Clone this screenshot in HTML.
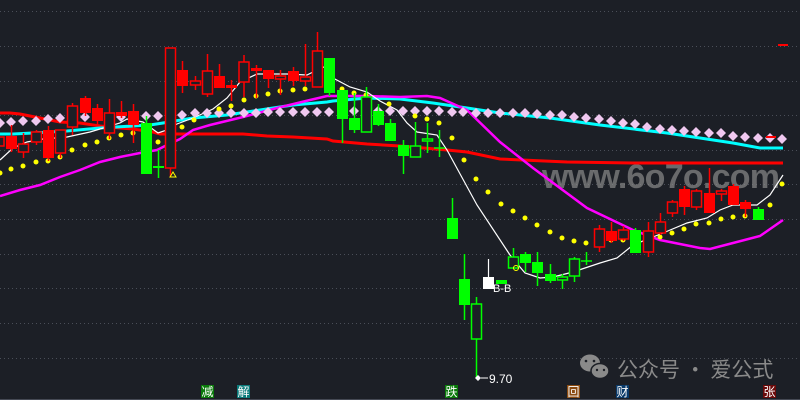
<!DOCTYPE html>
<html><head><meta charset="utf-8"><style>
html,body{margin:0;padding:0;background:#1c1f26;}
svg{display:block}
</style></head><body>
<svg width="800" height="400" viewBox="0 0 800 400" xmlns="http://www.w3.org/2000/svg">
<rect width="800" height="400" fill="#1c1f26"/>
<g stroke="#4a4e58" stroke-width="1" stroke-dasharray="1,3">
<line x1="0" y1="11.5" x2="800" y2="11.5"/><line x1="0" y1="46.5" x2="800" y2="46.5"/><line x1="0" y1="81.5" x2="800" y2="81.5"/><line x1="0" y1="115.5" x2="800" y2="115.5"/><line x1="0" y1="150.5" x2="800" y2="150.5"/><line x1="0" y1="184.5" x2="800" y2="184.5"/><line x1="0" y1="219.5" x2="800" y2="219.5"/><line x1="0" y1="254.5" x2="800" y2="254.5"/><line x1="0" y1="288.5" x2="800" y2="288.5"/><line x1="0" y1="323.5" x2="800" y2="323.5"/><line x1="0" y1="358.5" x2="800" y2="358.5"/>
</g>
<line x1="0" y1="399.5" x2="800" y2="399.5" stroke="#454954"/>
<!-- watermark -->
<text x="542" y="188" font-family="Liberation Sans, sans-serif" font-size="34" font-weight="bold" fill="#8a8a8a" fill-opacity="0.7" textLength="238">www.6o7o.com</text>
<!-- lines -->
<polyline fill="none" stroke="#ff0000" stroke-width="3" points="0,113 10,113 20,114 40,118 60,122 80,123 100,126 120,128 133,129 153,132 160,134 243,134 267,136 293,137 327,139 333,141 367,144 400,146 447,150 467,152 500,159 567,162 633,163 700,163 783,163"/>
<polyline fill="none" stroke="#00ffff" stroke-width="3" points="0,134 13,134 33,133 67,131 100,128 133,126 150,125 163,123 193,118 227,115 260,110 293,105 327,102 333,101 367,98 400,99 433,103 467,108 500,113 550,118 600,125 667,133 700,138 733,143 760,148 783,148"/>
<polyline fill="none" stroke="#ff00ff" stroke-width="2.5" points="0,196 20,190 40,185 60,177 80,170 100,162 120,157 140,153 157,150 167,145 180,139 193,130 210,125 243,117 277,108 310,100 327,96 367,96 400,97 427,96 440,98 467,110 500,142 533,168 587,208 633,230 660,240 700,248 710,249 733,243 760,236 783,220"/>
<polyline fill="none" stroke="#ffffff" stroke-width="1.2" points="0,160 13,148 27,142 43,139 67,137 90,132 100,129 120,123 127,119 143,122 158,133 167,130 177,124 193,118 213,109 227,98 240,82 257,74 287,74 307,75 313,72 324,67 333,78 350,87 367,92 380,101 397,110 407,123 417,132 437,135 447,150 477,205 510,255 525,273 540,278 553,277 573,272 600,263 617,258 633,245 663,233 687,223 707,218 720,210 733,205 757,205 770,195 783,175"/>
<!-- pink diamonds -->
<g fill="#f0c8f0">
<path d="M0,118l5,5l-5,5l-5,-5z"/><path d="M11,117l5,5l-5,5l-5,-5z"/><path d="M23,116l5,5l-5,5l-5,-5z"/><path d="M36,116l5,5l-5,5l-5,-5z"/><path d="M48,114l5,5l-5,5l-5,-5z"/><path d="M60,113l5,5l-5,5l-5,-5z"/><path d="M85,112l5,5l-5,5l-5,-5z"/><path d="M121,112l5,5l-5,5l-5,-5z"/><path d="M146,111l5,5l-5,5l-5,-5z"/><path d="M158,111l5,5l-5,5l-5,-5z"/><path d="M182,110l5,5l-5,5l-5,-5z"/><path d="M195,108l5,5l-5,5l-5,-5z"/><path d="M207,108l5,5l-5,5l-5,-5z"/><path d="M219,108l5,5l-5,5l-5,-5z"/><path d="M231,108l5,5l-5,5l-5,-5z"/><path d="M244,108l5,5l-5,5l-5,-5z"/><path d="M256,108l5,5l-5,5l-5,-5z"/><path d="M268,107l5,5l-5,5l-5,-5z"/><path d="M280,107l5,5l-5,5l-5,-5z"/><path d="M293,107l5,5l-5,5l-5,-5z"/><path d="M305,107l5,5l-5,5l-5,-5z"/><path d="M317,107l5,5l-5,5l-5,-5z"/><path d="M329,107l5,5l-5,5l-5,-5z"/><path d="M354,106l5,5l-5,5l-5,-5z"/><path d="M378,106l5,5l-5,5l-5,-5z"/><path d="M390,106l5,5l-5,5l-5,-5z"/><path d="M403,106l5,5l-5,5l-5,-5z"/><path d="M415,106l5,5l-5,5l-5,-5z"/><path d="M427,106l5,5l-5,5l-5,-5z"/><path d="M439,106l5,5l-5,5l-5,-5z"/><path d="M452,107l5,5l-5,5l-5,-5z"/><path d="M463,107l5,5l-5,5l-5,-5z"/><path d="M476,108l5,5l-5,5l-5,-5z"/><path d="M488,108l5,5l-5,5l-5,-5z"/><path d="M500,108l5,5l-5,5l-5,-5z"/><path d="M513,108l5,5l-5,5l-5,-5z"/><path d="M525,108l5,5l-5,5l-5,-5z"/><path d="M537,109l5,5l-5,5l-5,-5z"/><path d="M550,110l5,5l-5,5l-5,-5z"/><path d="M562,110l5,5l-5,5l-5,-5z"/><path d="M574,112l5,5l-5,5l-5,-5z"/><path d="M586,113l5,5l-5,5l-5,-5z"/><path d="M599,114l5,5l-5,5l-5,-5z"/><path d="M611,116l5,5l-5,5l-5,-5z"/><path d="M623,118l5,5l-5,5l-5,-5z"/><path d="M635,119l5,5l-5,5l-5,-5z"/><path d="M647,122l5,5l-5,5l-5,-5z"/><path d="M660,124l5,5l-5,5l-5,-5z"/><path d="M672,125l5,5l-5,5l-5,-5z"/><path d="M684,126l5,5l-5,5l-5,-5z"/><path d="M696,127l5,5l-5,5l-5,-5z"/><path d="M709,128l5,5l-5,5l-5,-5z"/><path d="M721,128l5,5l-5,5l-5,-5z"/><path d="M733,131l5,5l-5,5l-5,-5z"/><path d="M745,132l5,5l-5,5l-5,-5z"/><path d="M758,133l5,5l-5,5l-5,-5z"/><path d="M770,133l5,5l-5,5l-5,-5z"/><path d="M782,134l5,5l-5,5l-5,-5z"/>
</g>
<!-- yellow dots -->
<g fill="#ffff00">
<circle cx="0" cy="173" r="2.5"/><circle cx="11" cy="169" r="2.5"/><circle cx="23" cy="166" r="2.5"/><circle cx="36" cy="162" r="2.5"/><circle cx="48" cy="161" r="2.5"/><circle cx="60" cy="157" r="2.5"/><circle cx="72" cy="150" r="2.5"/><circle cx="85" cy="145" r="2.5"/><circle cx="97" cy="142" r="2.5"/><circle cx="109" cy="138" r="2.5"/><circle cx="121" cy="135" r="2.5"/><circle cx="133" cy="133" r="2.5"/><circle cx="158" cy="142" r="2.5"/><circle cx="182" cy="127" r="2.5"/><circle cx="194" cy="120" r="2.5"/><circle cx="219" cy="109" r="2.5"/><circle cx="231" cy="106" r="2.5"/><circle cx="244" cy="100" r="2.5"/><circle cx="256" cy="96" r="2.5"/><circle cx="268" cy="94" r="2.5"/><circle cx="280" cy="91" r="2.5"/><circle cx="293" cy="90" r="2.5"/><circle cx="305" cy="89" r="2.5"/><circle cx="342" cy="89" r="2.5"/><circle cx="354" cy="93" r="2.5"/><circle cx="366" cy="95" r="2.5"/><circle cx="389" cy="104" r="2.5"/><circle cx="415" cy="116" r="2.5"/><circle cx="427" cy="119" r="2.5"/><circle cx="439" cy="123" r="2.5"/><circle cx="452" cy="138" r="2.5"/><circle cx="464" cy="160" r="2.5"/><circle cx="476" cy="179" r="2.5"/><circle cx="488" cy="192" r="2.5"/><circle cx="501" cy="204" r="2.5"/><circle cx="513" cy="211" r="2.5"/><circle cx="525" cy="218" r="2.5"/><circle cx="537" cy="225" r="2.5"/><circle cx="550" cy="232" r="2.5"/><circle cx="562" cy="238" r="2.5"/><circle cx="574" cy="241" r="2.5"/><circle cx="586" cy="243" r="2.5"/><circle cx="611" cy="240" r="2.5"/><circle cx="623" cy="240" r="2.5"/><circle cx="660" cy="237" r="2.5"/><circle cx="672" cy="233" r="2.5"/><circle cx="684" cy="229" r="2.5"/><circle cx="696" cy="224" r="2.5"/><circle cx="709" cy="223" r="2.5"/><circle cx="721" cy="219" r="2.5"/><circle cx="733" cy="217" r="2.5"/><circle cx="745" cy="216" r="2.5"/><circle cx="770" cy="205" r="2.5"/><circle cx="782" cy="184" r="2.5"/>
</g>
<!-- red candles -->
<g stroke="#ff0000" stroke-width="1.5">
<line x1="11.5" y1="125" x2="11.5" y2="152"/><line x1="23.5" y1="133" x2="23.5" y2="158"/><line x1="36.5" y1="130" x2="36.5" y2="145"/><line x1="48.5" y1="126" x2="48.5" y2="161"/><line x1="60.5" y1="130" x2="60.5" y2="158"/><line x1="72.5" y1="103" x2="72.5" y2="135"/><line x1="85.5" y1="96" x2="85.5" y2="116"/><line x1="97.5" y1="104" x2="97.5" y2="126"/><line x1="109.5" y1="99" x2="109.5" y2="139"/><line x1="121.5" y1="101" x2="121.5" y2="118"/><line x1="133.5" y1="104" x2="133.5" y2="143"/><line x1="170.5" y1="78" x2="170.5" y2="177"/>
<line x1="182.5" y1="61" x2="182.5" y2="93"/><line x1="195.5" y1="76" x2="195.5" y2="90"/><line x1="207.5" y1="54" x2="207.5" y2="97"/><line x1="219.5" y1="64" x2="219.5" y2="88"/><line x1="231.5" y1="80" x2="231.5" y2="101"/><line x1="244" y1="55" x2="244" y2="97"/><line x1="256.5" y1="65" x2="256.5" y2="98"/><line x1="268.5" y1="70" x2="268.5" y2="88"/><line x1="280.5" y1="70" x2="280.5" y2="95"/><line x1="293.5" y1="67" x2="293.5" y2="86"/><line x1="305.5" y1="44" x2="305.5" y2="86"/><line x1="317.5" y1="32" x2="317.5" y2="87"/>
<line x1="599.5" y1="225" x2="599.5" y2="252"/><line x1="611.5" y1="222" x2="611.5" y2="243"/><line x1="623.5" y1="226" x2="623.5" y2="241"/><line x1="648.5" y1="222" x2="648.5" y2="257"/><line x1="660.5" y1="213" x2="660.5" y2="235"/><line x1="672.5" y1="200" x2="672.5" y2="217"/><line x1="684.5" y1="186" x2="684.5" y2="215"/><line x1="696.5" y1="189" x2="696.5" y2="210"/><line x1="709.5" y1="168" x2="709.5" y2="213"/><line x1="721.5" y1="189" x2="721.5" y2="201"/><line x1="733.5" y1="184" x2="733.5" y2="205"/><line x1="745.5" y1="200" x2="745.5" y2="217"/>
</g>
<g fill="#ff0000">
<rect x="6" y="136" width="11" height="13"/><rect x="43" y="130" width="11" height="28"/><rect x="80" y="98" width="11" height="15"/><rect x="92" y="108" width="11" height="13"/><rect x="116" y="112" width="11" height="4"/><rect x="128" y="111" width="11" height="14"/>
<rect x="177" y="70" width="11" height="16"/><rect x="214" y="76" width="11" height="12"/><rect x="226" y="85" width="11" height="3"/><rect x="251" y="68" width="11" height="3"/><rect x="263" y="70" width="11" height="9"/><rect x="288" y="71" width="11" height="10"/>
<rect x="606" y="231" width="11" height="10"/><rect x="679" y="189" width="11" height="18"/><rect x="704" y="193" width="11" height="20"/><rect x="728" y="186" width="11" height="19"/><rect x="740" y="202" width="11" height="7"/>
<rect x="766" y="136" width="10" height="2"/><rect x="778" y="44" width="10" height="2"/>
</g>
<g fill="#1c1f26" stroke="#ff0000" stroke-width="1.5">
<rect x="-4" y="137" width="8" height="9"/><rect x="18.5" y="144" width="10" height="8"/><rect x="31.5" y="132" width="10" height="10"/><rect x="55.5" y="130" width="10" height="23"/><rect x="67.5" y="106" width="10" height="21"/><rect x="104.5" y="113" width="10" height="20"/><rect x="165.5" y="48" width="10" height="120"/>
<rect x="190.5" y="81" width="10" height="4"/><rect x="202.5" y="71" width="10" height="23"/><rect x="239" y="62" width="10" height="20"/><rect x="275.5" y="76" width="10" height="3"/><rect x="300.5" y="77" width="10" height="4"/><rect x="312.5" y="51" width="10" height="36"/>
<rect x="594.5" y="229" width="10" height="18"/><rect x="618.5" y="230" width="10" height="9"/><rect x="643.5" y="231" width="10" height="21"/><rect x="655.5" y="222" width="10" height="11"/><rect x="667.5" y="202" width="10" height="11"/><rect x="691.5" y="191" width="10" height="16"/><rect x="716.5" y="191" width="10" height="3"/>
</g>
<!-- green candles -->
<g stroke="#00ff00" stroke-width="1.5">
<line x1="146.5" y1="116" x2="146.5" y2="174"/><line x1="158.5" y1="150" x2="158.5" y2="178"/><line x1="153" y1="167" x2="164" y2="167" stroke-width="2"/>
<line x1="329.5" y1="58" x2="329.5" y2="96"/><line x1="342.5" y1="90" x2="342.5" y2="143"/><line x1="354.5" y1="93" x2="354.5" y2="133"/><line x1="366.5" y1="87" x2="366.5" y2="132"/><line x1="378.5" y1="104" x2="378.5" y2="126"/><line x1="390.5" y1="119" x2="390.5" y2="141"/><line x1="403.5" y1="140" x2="403.5" y2="174"/><line x1="415.5" y1="122" x2="415.5" y2="146"/><line x1="427.5" y1="123" x2="427.5" y2="153"/><line x1="439.5" y1="130" x2="439.5" y2="157"/><line x1="434" y1="148" x2="445" y2="148"/>
<line x1="452.5" y1="198" x2="452.5" y2="239"/><line x1="464.5" y1="254" x2="464.5" y2="320"/><line x1="476.5" y1="297" x2="476.5" y2="378"/><line x1="513.5" y1="248" x2="513.5" y2="268"/><line x1="525.5" y1="252" x2="525.5" y2="272"/><line x1="537.5" y1="252" x2="537.5" y2="286"/><line x1="550.5" y1="264" x2="550.5" y2="283"/><line x1="562.5" y1="274" x2="562.5" y2="289"/><line x1="574.5" y1="257" x2="574.5" y2="282"/><line x1="586.5" y1="252" x2="586.5" y2="265"/><line x1="581" y1="261" x2="592" y2="261"/><line x1="635.5" y1="228" x2="635.5" y2="253"/><line x1="758.5" y1="207" x2="758.5" y2="220"/>
</g>
<g fill="#00ff00">
<rect x="141" y="123" width="11" height="51"/><rect x="324" y="58" width="11" height="35"/><rect x="337" y="90" width="11" height="29"/><rect x="349" y="118" width="11" height="12"/><rect x="373" y="111" width="11" height="14"/><rect x="385" y="123" width="11" height="18"/><rect x="398" y="145" width="11" height="11"/>
<rect x="447" y="218" width="11" height="21"/><rect x="459" y="279" width="11" height="26"/><rect x="496" y="280" width="11" height="4"/><rect x="520" y="254" width="11" height="9"/><rect x="532" y="262" width="11" height="11"/><rect x="545" y="274" width="11" height="7"/><rect x="630" y="230" width="11" height="23"/><rect x="753" y="209" width="11" height="11"/>
</g>
<g fill="#1c1f26" stroke="#00ff00" stroke-width="1.5">
<rect x="361.5" y="97" width="10" height="35"/><rect x="410.5" y="146" width="10" height="11"/><rect x="422.5" y="139" width="10" height="2"/>
<rect x="471.5" y="304" width="10" height="35"/><rect x="508.5" y="257" width="10" height="11"/><rect x="557.5" y="277" width="10" height="3"/><rect x="569.5" y="259" width="10" height="17"/>
</g>
<!-- white candle -->
<line x1="488.5" y1="259" x2="488.5" y2="278" stroke="#fff" stroke-width="1.2"/>
<rect x="483" y="277" width="11" height="12" fill="#fff"/>
<text x="493" y="292" font-family="Liberation Sans, sans-serif" font-size="11" fill="#fff">B-B</text>
<circle cx="516" cy="268" r="2.5" fill="none" stroke="#ffff00" stroke-width="1"/>
<path d="M173,172l3,5h-6z" fill="none" stroke="#ffff00" stroke-width="1"/>
<!-- low label -->
<path d="M478,375l3,3l-3,3l-3,-3z" fill="#fff"/>
<line x1="481" y1="378" x2="488" y2="378" stroke="#fff"/>
<text x="489" y="383" font-family="Liberation Sans, sans-serif" font-size="12" fill="#fff">9.70</text>
<!-- bottom labels -->
<g font-family="Liberation Sans, 'Noto Sans CJK SC', sans-serif" font-size="12" fill="#fff" text-anchor="middle">
<rect x="201" y="385" width="13" height="13" fill="#0a7a0a"/><text x="207.5" y="396">减</text>
<rect x="237" y="385" width="13" height="13" fill="#0a7a7a"/><text x="243.5" y="396">解</text>
<rect x="445" y="385" width="13" height="13" fill="#0a7a0a"/><text x="451.5" y="396">跌</text>
<rect x="567" y="385" width="13" height="13" fill="#8a4a10"/><text x="573.5" y="396">回</text>
<rect x="616" y="385" width="13" height="13" fill="#0a3a6a"/><text x="622.5" y="396">财</text>
<rect x="763" y="385" width="13" height="13" fill="#6a0a0a"/><text x="769.5" y="396">张</text>
</g>
<!-- wechat watermark -->
<g fill="#8a8a8a">
<ellipse cx="590" cy="363" rx="10" ry="8.5"/>
<ellipse cx="600" cy="371" rx="9" ry="7.5" stroke="#1c1f26" stroke-width="1.5"/>
</g>
<g fill="#1c1f26"><circle cx="586" cy="361" r="1.3"/><circle cx="594" cy="361" r="1.3"/><circle cx="597" cy="370" r="1.2"/><circle cx="604" cy="370" r="1.2"/></g>
<text x="617" y="377" font-family="'Noto Sans CJK SC', sans-serif" font-size="21" fill="#8a8a8a">公众号 · 爱公式</text>
</svg>
</body></html>
